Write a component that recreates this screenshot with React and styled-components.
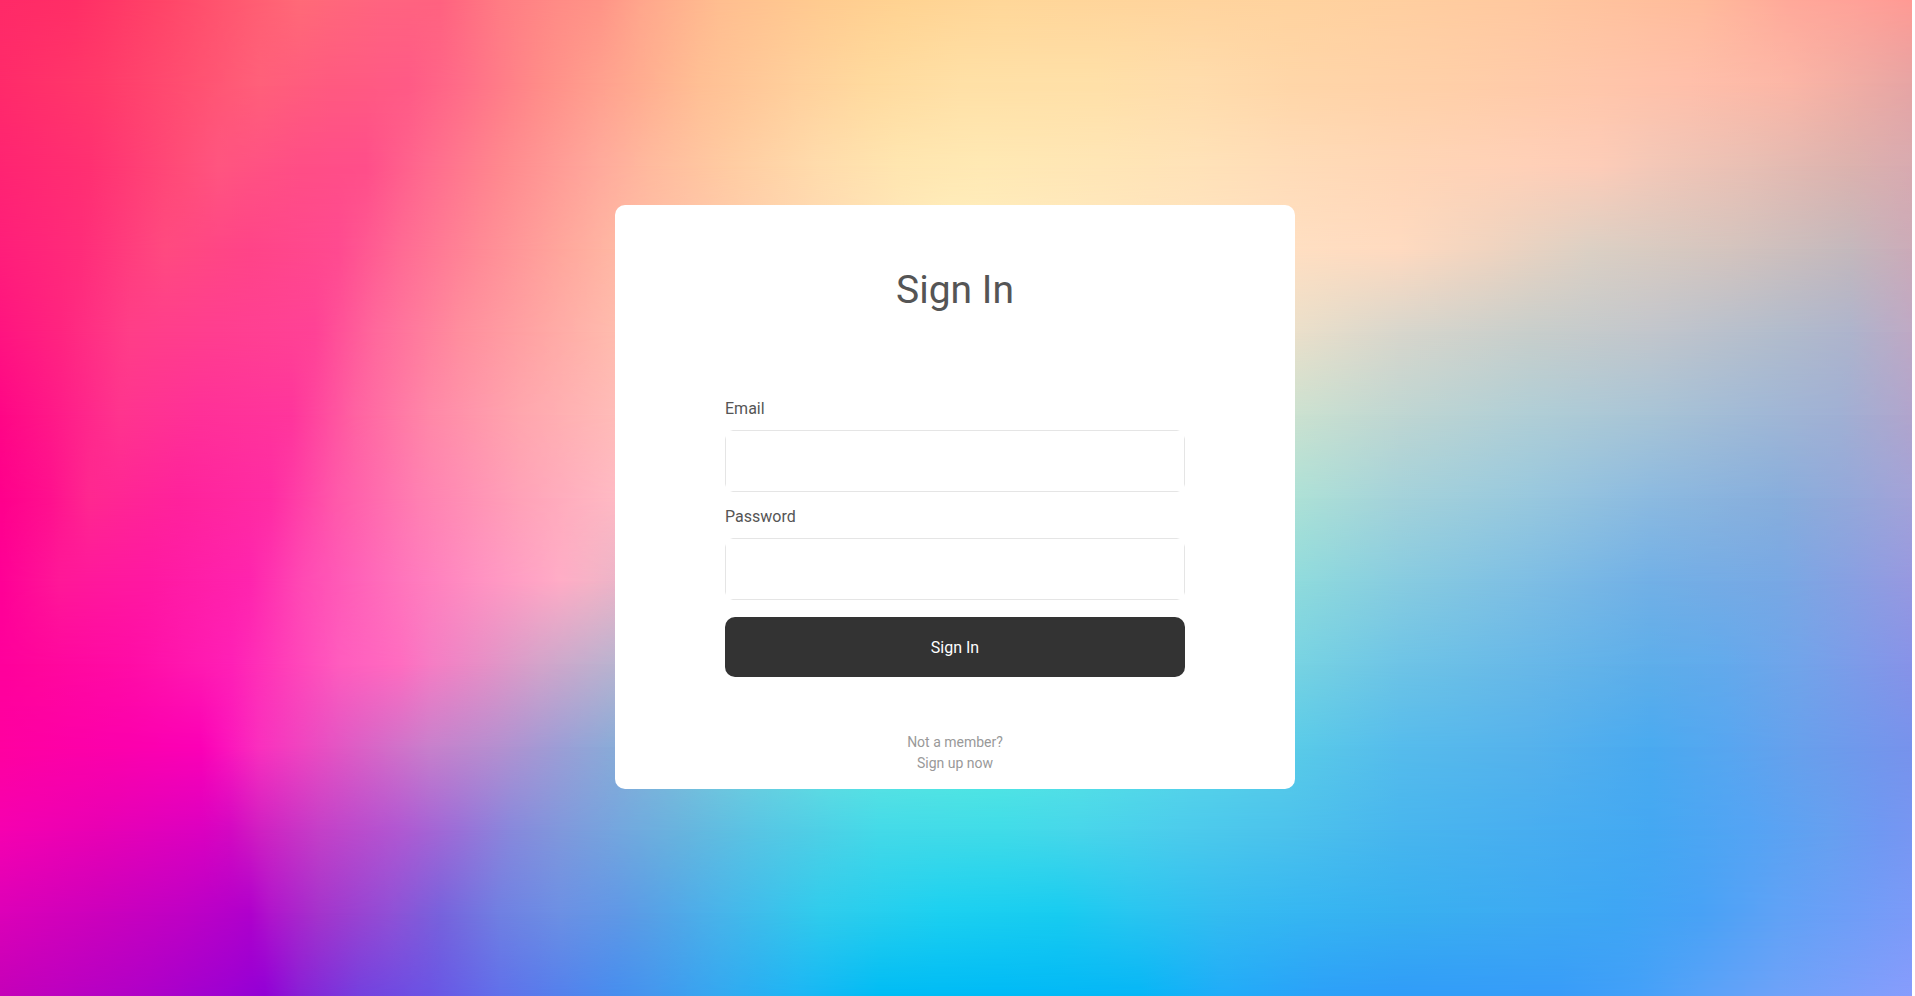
import React from "react";
import styled, { createGlobalStyle } from "styled-components";

const GlobalStyle = createGlobalStyle`
  *, *::before, *::after { box-sizing: border-box; }
  html, body { margin: 0; padding: 0; background: #fff; overflow: hidden; }
  body { font-family: Roboto, "Liberation Sans", sans-serif; }
`;

// Colour bands of the backdrop, evenly spaced from top to bottom.
// Each band is a left-to-right gradient, written as "x colour" stops.
const BANDS = [
  "0 ff2a68,75 ff2e66,160 ff4468,300 ff6a78,380 ff6480,440 ff6280,500 ff7c84,560 ff8c86,600 ff9487,640 ffa68c,720 ffbe90,820 ffcb90,900 ffd392,1000 ffd799,1200 ffd49e,1290 ffd39f,1400 ffcfa0,1530 ffc8a0,1700 ffbb9c,1790 ffa99a,1865 ffa198,1915 ff9a94",
  "0 ff2a6a,100 ff3a6a,200 ff5272,260 ff607a,330 ff5a80,408 ff5a86,460 ff6c88,540 ff8c88,600 ffa08e,640 ffac90,700 ffbf94,800 ffd09c,870 ffda9e,960 ffe0a6,1100 ffe0a8,1200 ffdcac,1290 ffd6a8,1450 ffcfa8,1600 ffc6aa,1690 ffbfaa,1790 fcb6a6,1860 f0aca4,1915 e6a4a4",
  "0 ff2472,90 ff3072,180 ff4c78,218 ff5580,300 ff4e86,366 ff4e8a,425 ff6a8e,500 ff888e,600 ffaa9c,650 ffba9e,730 ffcca2,820 ffdcac,900 ffe6b0,980 ffe9b4,1100 ffe6b6,1200 ffe2b8,1290 ffdcb8,1400 ffd6b6,1530 ffd0b8,1600 fdccb8,1650 f4c8b8,1750 e8bfb4,1850 dcb2ae,1915 d8aab0",
  "0 ff1e7a,80 ff2c7a,165 ff4a80,250 ff4488,338 ff4a90,400 ff6a94,480 ff8a96,560 ffa69c,617 ffb8a4,950 fff0c0,1290 ffdfc2,1400 ffdac0,1490 f0d4c0,1590 dcd0c4,1730 d4c4be,1850 c4b8bc,1915 ccaab8",
  "0 ff1480,60 ff2480,130 ff3e88,220 ff3e90,315 ff4296,375 ff689c,460 ff8e9e,540 ffa6a4,617 ffbcae,1290 ece0ca,1400 d8d6cc,1530 c8cecb,1650 c2c6cc,1780 b2bccc,1850 aeb4cc,1915 c0a8c4",
  "0 ff0686,50 ff1888,120 ff348e,200 ff3098,292 ff359c,355 ff62a2,430 ff88a8,520 ffa6ae,617 ffbcb8,1290 cce2d0,1400 bfd6d2,1530 b0ced6,1650 a8c4d6,1760 a0b8d6,1840 a0b0d4,1915 b2a4cc",
  "0 ff008c,50 ff108e,90 ff2890,180 ff229c,271 ff2ca4,335 ff58aa,420 ff80b2,520 ffa2b8,617 ffbac4,1290 aee2d6,1400 a4d2da,1530 98c8de,1650 8cbae0,1780 88aedc,1850 94a8da,1915 a4a2d8",
  "0 ff0096,60 ff1898,150 ff18a2,249 ff24ae,303 ff4ab4,400 ff74bc,480 ff92c2,560 ffacc6,590 f6b2c6,617 ecb4c8,1290 90dcdc,1400 88cce0,1530 7ebee4,1650 72b0e6,1780 78a8e4,1850 88a0e2,1915 9898e0",
  "0 ff009c,40 ff069c,130 ff0ca6,232 ff20b6,280 ff3cb8,340 ff5cbe,400 ff6cc0,430 f67cc4,480 e88ec6,540 d4a4ca,617 b8b4d0,1290 78d4e2,1400 6ec4e6,1530 68b8e8,1650 5eaeea,1720 62aaec,1800 72a4ea,1915 8892e8",
  "0 ff00a0,120 fc00ac,200 fc00b6,227 fc14bc,260 fa30be,300 f044c0,360 dc60c6,430 c880cc,500 b490d0,560 9c9ed6,617 88acd8,720 7accdc,830 68e4e0,960 5cecdf,1080 5ae4e4,1200 5ad6e8,1290 5acce8,1400 56bcec,1530 56b2ec,1650 4aaaf0,1730 58a6f0,1800 68a0ec,1915 7892ec",
  "0 f600b0,100 e800b4,200 dc00c0,230 d408c2,260 d020c2,320 c440c8,400 b058d2,460 9a70d8,510 8888dc,560 8098dc,617 74a6de,680 68b4de,760 58c6e4,880 44dae8,1000 40dce8,1080 48d6ea,1180 4cccec,1290 4cc2ec,1400 48b6ee,1530 48aef0,1650 44a8f2,1750 54a4f4,1830 66a0f0,1880 7098f2,1915 7896f2",
  "0 dc00b8,100 cc00bc,180 c000c4,250 b000cc,270 b014cc,320 a434cc,390 9050d6,440 7862dc,500 7080e2,560 6c90e4,617 6098e6,650 58a0e6,720 48b4ea,820 30ccec,940 1cd0f0,1060 18ccf0,1130 28c6f0,1220 34bcf0,1300 36b6f2,1400 38b0f0,1530 3eaaf2,1620 3ea6f4,1700 48a2f6,1780 60a2f6,1915 7c9af8",
  "0 c400b8,60 bc00c0,150 ae00c8,230 9c00d2,265 9200d6,300 8820d6,360 7440de,430 6a54e4,500 6070ea,560 5480ec,617 468eee,650 4496ee,720 34a8f0,800 1cb6f4,880 00bcf4,1000 00baf6,1140 06b6f6,1220 20acf8,1320 2ca0f8,1400 309cf8,1560 389cf8,1640 44a0f8,1700 58a2f8,1780 6ea2f8,1915 889cfc",
];

const toGradient = (band) =>
  `linear-gradient(90deg, ${band
    .split(",")
    .map((stop) => {
      const [x, colour] = stop.split(" ");
      return `#${colour} ${x}px`;
    })
    .join(", ")})`;

const toMask = (index) => {
  if (index === 0) return "none";
  const step = 100 / (BANDS.length - 1);
  return `linear-gradient(180deg, transparent ${(index - 1) * step}%, #000 ${index * step}%)`;
};

const Page = styled.main`
  position: relative;
  isolation: isolate;
  display: flex;
  justify-content: center;
  align-items: flex-start;
  width: 1912px;
  height: 996px;
  padding: 205px 2px 0 0;
  overflow: hidden;
`;

const ColourBand = styled.div`
  position: absolute;
  inset: 0;
  z-index: -1;
  background: ${(p) => toGradient(BANDS[p.$index])};
  mask-image: ${(p) => toMask(p.$index)};
`;

const Card = styled.section`
  display: flex;
  flex-direction: column;
  align-items: center;
  width: 680px;
  height: 584px;
  padding: 61px 110px 0;
  border-radius: 10px;
  background: #fff;
`;

const Title = styled.h1`
  margin: 0 0 83px;
  font-size: 39px;
  font-weight: 400;
  line-height: 48px;
  color: #555;
`;

const Form = styled.form`
  display: flex;
  flex-direction: column;
  width: 460px;
`;

const Field = styled.label`
  display: flex;
  flex-direction: column;
  height: 108px;
  font-size: 16px;
  line-height: 24px;
  color: #555;
`;

const Input = styled.input`
  width: 100%;
  height: 62px;
  margin: 9px 0 0;
  padding: 0 20px;
  border: 0;
  outline: 0;
  font: inherit;
  color: #555;
  --across: linear-gradient(90deg, transparent, #e5e5e5 3px, #e5e5e5 calc(100% - 3px), transparent);
  --down: linear-gradient(180deg, transparent, #e5e5e5 3px, #e5e5e5 calc(100% - 3px), transparent);
  background:
    var(--across) center top / 450px 1px no-repeat,
    var(--across) center bottom / 450px 1px no-repeat,
    var(--down) left center / 1px 51px no-repeat,
    var(--down) right center / 1px 51px no-repeat,
    #fff;
`;

const SubmitButton = styled.button`
  height: 60px;
  margin-top: 4px;
  padding: 1px 0 0;
  border: 0;
  border-radius: 10px;
  background: #333;
  color: #fff;
  font: 400 16px/24px Roboto, "Liberation Sans", sans-serif;
`;

const Footer = styled.p`
  margin: 55px 0 0;
  text-align: center;
  font-size: 14px;
  line-height: 21px;
  color: #999;
`;

const FooterLine = styled.span`
  display: block;
`;

export default function App() {
  return (
    <>
      <GlobalStyle />
      <Page>
        {BANDS.map((_, index) => (
          <ColourBand key={index} $index={index} aria-hidden="true" />
        ))}
        <Card>
          <Title>Sign In</Title>
          <Form onSubmit={(event) => event.preventDefault()}>
            <Field>
              Email
              <Input type="email" />
            </Field>
            <Field>
              Password
              <Input type="password" />
            </Field>
            <SubmitButton type="submit">Sign In</SubmitButton>
          </Form>
          <Footer>
            <FooterLine>Not a member?</FooterLine>
            <FooterLine>Sign up now</FooterLine>
          </Footer>
        </Card>
      </Page>
    </>
  );
}
